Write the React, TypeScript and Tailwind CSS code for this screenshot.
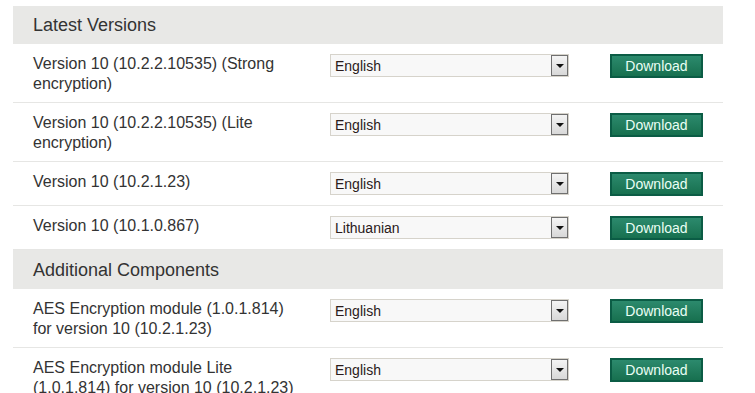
import React from "react";

type Row = { name: string; lang: string };

const latest: Row[] = [
  { name: "Version 10 (10.2.2.10535) (Strong encryption)", lang: "English" },
  { name: "Version 10 (10.2.2.10535) (Lite encryption)", lang: "English" },
  { name: "Version 10 (10.2.1.23)", lang: "English" },
  { name: "Version 10 (10.1.0.867)", lang: "Lithuanian" },
];

const additional: Row[] = [
  { name: "AES Encryption module (1.0.1.814) for version 10 (10.2.1.23)", lang: "English" },
  { name: "AES Encryption module Lite (1.0.1.814) for version 10 (10.2.1.23)", lang: "English" },
];

function Select({ lang }: { lang: string }) {
  return (
    <div className="w-[239px] h-[23px] border border-[#d6d3cb] bg-[#f8f8f8] flex items-center justify-between shrink-0">
      <span className="pl-[4px] text-[14px] leading-none text-[#2a1a1a]">{lang}</span>
      <div className="w-[17px] h-[21px] border border-[#6f6f6f] bg-gradient-to-b from-[#f4f4f4] to-[#d8d8d8] flex items-center justify-center">
        <div className="w-0 h-0 border-l-[4px] border-r-[4px] border-t-[4px] border-l-transparent border-r-transparent border-t-[#111]" />
      </div>
    </div>
  );
}

function Button() {
  return (
    <div className="w-[93px] h-[24px] border-2 border-[#0b5c45] bg-gradient-to-b from-[#2c8a6d] to-[#17704f] flex items-center justify-center shrink-0">
      <span className="text-[14px] leading-none text-[#eafff5]">Download</span>
    </div>
  );
}

function Item({ row, last }: { row: Row; last?: boolean }) {
  return (
    <div className={"min-h-[44px] flex items-start pt-[10px] pb-[8px] " + (last ? "" : "border-b border-[#e6e6e4]")}>
      <div className="w-[285px] pl-[20px] text-[16px] leading-[20px] text-[#333]">{row.name}</div>
      <div className="ml-[32px]">
        <Select lang={row.lang} />
      </div>
      <div className="ml-[41px]">
        <Button />
      </div>
    </div>
  );
}

function Header({ title, tall }: { title: string; tall?: boolean }) {
  return (
    <div className={(tall ? "h-[39px] pt-[1px] " : "h-[38px] ") + "bg-[#e8e8e6] flex items-center pl-[20px] text-[18px] text-[#333]"}>{title}</div>
  );
}

export default function App() {
  return (
    <div className="w-[755px] h-[393px] overflow-hidden bg-white" style={{ fontFamily: '"Liberation Sans", Arial, sans-serif' }}>
      <div className="ml-[13px] mt-[6px] w-[710px]">
        <Header title="Latest Versions" />
        {latest.map((r, i) => (
          <Item key={i} row={r} />
        ))}
        <Header title="Additional Components" tall />
        {additional.map((r, i) => (
          <Item key={i} row={r} last={i === additional.length - 1} />
        ))}
      </div>
    </div>
  );
}
